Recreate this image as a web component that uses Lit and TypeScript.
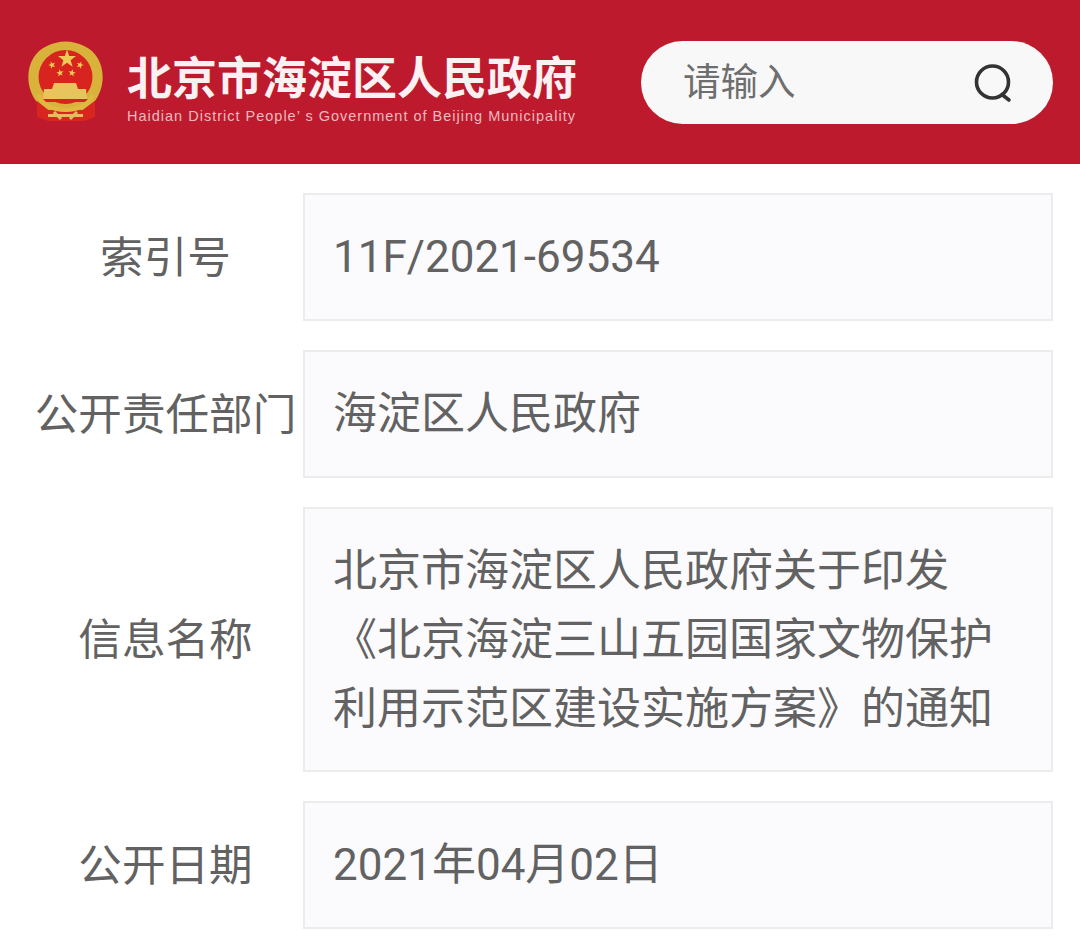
import { LitElement, html, css, svg } from "lit";
import { customElement } from "lit/decorators.js";

const star = (cx: number, cy: number, r: number, rot = 0) => {
  const pts: string[] = [];
  for (let i = 0; i < 10; i++) {
    const rr = i % 2 ? r * 0.4 : r;
    const a = ((-90 + rot + i * 36) * Math.PI) / 180;
    pts.push(`${(cx + rr * Math.cos(a)).toFixed(1)},${(cy + rr * Math.sin(a)).toFixed(1)}`);
  }
  return svg`<polygon points=${pts.join(" ")} fill="#eecb55"/>`;
};

@customElement("app-root")
export class AppRoot extends LitElement {
  static styles = css`
    :host {
      display: block;
      width: 1080px;
      height: 938px;
      overflow: hidden;
      background: #fff;
      font-family: Roboto, "Noto Sans CJK SC", sans-serif;
      color: #626262;
    }
    .header {
      height: 164px;
      background: #bd1b2d;
      display: flex;
      align-items: flex-start;
      padding: 41px 27px 0 28px;
      box-sizing: border-box;
    }
    .emblem { width: 77px; height: 82px; flex: none; display: block; }
    .brand {
      width: 536px;
      flex: none;
      padding-left: 22px;
      box-sizing: border-box;
      color: #fbf1f2;
    }
    .title {
      font-family: "Noto Sans CJK SC", sans-serif;
      font-size: 45px;
      line-height: 45px;
      font-weight: 700;
      margin-top: 12px;
      white-space: nowrap;
    }
    .sub {
      font-family: "Liberation Sans", sans-serif;
      font-size: 14.5px;
      line-height: 16px;
      margin-top: 10px;
      color: #edb9bf;
      letter-spacing: 1px;
      white-space: nowrap;
    }
    .search {
      flex: 1;
      height: 83px;
      border-radius: 42px;
      background: #f8f8f8;
      display: flex;
      align-items: center;
      justify-content: space-between;
      padding: 0 41px 0 42px;
    }
    .ph {
      font-family: "Noto Sans CJK SC", sans-serif;
      font-size: 37.5px;
      color: #6e6e6e;
      line-height: 1;
      margin-top: -8px;
    }
    .icon { width: 40px; height: 40px; display: block; }
    .list {
      display: flex;
      flex-direction: column;
      gap: 29px;
      padding: 29px 27px 0 29px;
    }
    .row { display: flex; align-items: center; }
    .label {
      width: 274px;
      flex: none;
      box-sizing: border-box;
      text-align: center;
      font-family: "Noto Sans CJK SC", sans-serif;
      font-size: 43.6px;
      line-height: 69px;
      padding: 0 1px 6px 0;
      white-space: nowrap;
    }
    .value {
      flex: 1;
      box-sizing: border-box;
      min-height: 128px;
      padding: 28px 20px 26px 28px;
      background: #fbfbfd;
      border: 2px solid #ececec;
      font-size: 44px;
      line-height: 69px;
    }
    .value span { display: block; white-space: nowrap; }
  `;

  render() {
    const rows: [string, string[]][] = [
      ["索引号", ["11F/2021-69534"]],
      ["公开责任部门", ["海淀区人民政府"]],
      ["信息名称", ["北京市海淀区人民政府关于印发", "《北京海淀三山五园国家文物保护", "利用示范区建设实施方案》的通知"]],
      ["公开日期", ["2021年04月02日"]],
    ];
    return html`
      <div class="header">
        <svg class="emblem" viewBox="0 0 77 82">
          <path d="M8 60 C-6 40 0 13 19 5 C31 -1 44 -1 56 5 C75 13 81 40 67 60 L55 69 H20 Z" fill="#d9b23c"/>
          <circle cx="37.5" cy="36" r="27" fill="#d8241f"/>
          <path d="M9 60 L20 69 L55 69 L67 60 L67 76 L56 80 L20 80 L9 76 Z" fill="#d8261f"/>
          ${star(39, 18, 9.5)} ${star(24, 24, 3.8, -20)} ${star(32, 32, 3.8, -10)} ${star(44, 32, 3.8, 10)} ${star(52, 24, 3.8, 20)}
          <path d="M26 42 H48 L50 48 H58 L59 58 H15 L16 48 H24 Z" fill="#e8c45c"/>
          <path d="M13 58 H61 V61 H13 Z" fill="#d8241f"/>
          <path d="M10 54 C16 66 27 69 37.5 69 C48 69 59 66 65 54" fill="none" stroke="#e2b840" stroke-width="4"/>
          <path d="M20 74.5 H55 M26 71 L33 78 M49 71 L42 78" fill="none" stroke="#e9bb5a" stroke-width="3"/>
        </svg>
        <div class="brand">
          <div class="title">北京市海淀区人民政府</div>
          <div class="sub">Haidian District People’ s Government of Beijing Municipality</div>
        </div>
        <div class="search">
          <span class="ph">请输入</span>
          <svg class="icon" viewBox="0 0 40 40" fill="none" stroke="#333" stroke-width="3.6" stroke-linecap="round">
            <circle cx="20.5" cy="19" r="16"/>
            <path d="M30 31.5 L37 37"/>
          </svg>
        </div>
      </div>
      <div class="list">
        ${rows.map(
          ([l, v]) => html`<div class="row">
            <div class="label">${l}</div>
            <div class="value">${v.map((t) => html`<span>${t}</span>`)}</div>
          </div>`
        )}
      </div>
    `;
  }
}
